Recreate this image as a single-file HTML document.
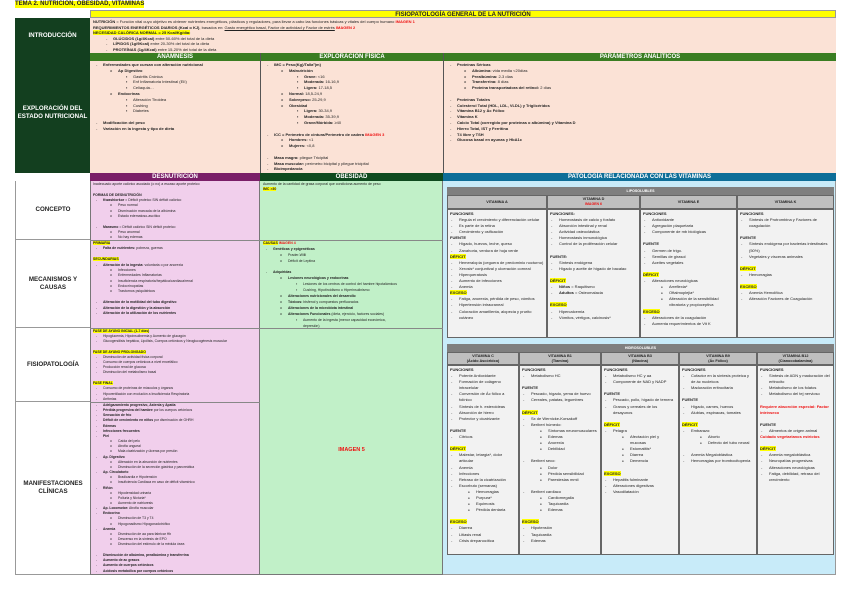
<!DOCTYPE html>
<html><head><meta charset="utf-8">
<style>
*{margin:0;padding:0;box-sizing:border-box}
body{width:848px;height:608px;background:#fff;font-family:"Liberation Sans",sans-serif;font-size:4px;line-height:5.8px;color:#222;position:relative;overflow:hidden}
.a{position:absolute}
.lab{position:absolute;display:flex;align-items:center;justify-content:center;text-align:center;font-weight:bold;font-size:6.2px;line-height:8px}
.dg{background:#133f1f;color:#fff}
.wl{background:#fff;color:#222;border-left:1px solid #999}
.hd{position:absolute;color:#fff;font-weight:bold;text-align:center;font-size:6px;line-height:8px}
.bx{position:absolute;padding:1px 3px;overflow:hidden}
.l1,.l2,.l3{position:relative}
.l1{padding-left:10px}.l1:before{content:"-";position:absolute;left:3px}
.l2{padding-left:25px}.l2:before{content:"o";position:absolute;left:17px}
.l3{padding-left:40px}.l3:before{content:"▪";position:absolute;left:33px}
.v{line-height:6.1px}
.v .l1{padding-left:9px}.v .l1:before{left:1px}
.v .l2{padding-left:26px}.v .l2:before{content:"●";left:18px;font-size:3px}
.v .sp{height:6.1px}
.y{background:#ffff00;font-weight:bold}
.r{color:#ee1111;font-weight:bold}
b{font-weight:bold}
.sp{height:5.8px}
.vh{position:absolute;background:#7f7f7f;color:#fff;font-weight:bold;text-align:center;font-size:3.6px;line-height:8px}
.vs{position:absolute;background:#bfbfbf;border:0.5px solid #666;font-weight:bold;text-align:center;font-size:3.8px;line-height:5px;display:flex;flex-direction:column;justify-content:center}
.vb{position:absolute;background:#f2f2f2;border:0.5px solid #666;padding:1px 2px;overflow:hidden}
</style></head><body>
<div class="a" style="left:15px;top:1px;font-weight:bold;font-size:6px;line-height:7px;background:#ffff00;color:#222">TEMA 2. NUTRICIÓN, OBESIDAD, VITAMINAS</div>

<!-- Row 1 -->
<div class="hd" style="left:90px;top:10px;width:746px;height:8px;background:#ffff00;color:#222;border:0.5px solid #999">FISIOPATOLOGÍA GENERAL DE LA NUTRICIÓN</div>
<div class="lab dg" style="left:15px;top:18px;width:75px;height:35px">INTRODUCCIÓN</div>
<div class="bx" style="left:90px;top:18px;width:746px;height:35px;background:#fbe2d6;line-height:5.6px">
<div><b>NUTRICIÓN</b> = Función vital cuyo objetivo es obtener nutrientes energéticos, plásticos y reguladores, para llevar a cabo las funciones básicas y vitales del cuerpo humano <span class="r">IMAGEN 1</span></div>
<div><b>REQUERIMIENTOS ENERGÉTICOS DIARIOS (Kcal o KJ)</b>, basados en: <u>Gasto energético basal, Factor de actividad y Factor de estrés</u> <span class="r">IMAGEN 2</span></div>
<div><span class="y">NECESIDAD CALÓRICA NORMAL = 25 Kcal/Kg/día:</span></div>
<div class="l1" style="margin-left:10px"><b>GLÚCIDOS (1g/4Kcal)</b> entre 50-60% del total de la dieta</div>
<div class="l1" style="margin-left:10px"><b>LÍPIDOS (1g/9Kcal)</b> entre 20-30% del total de la dieta</div>
<div class="l1" style="margin-left:10px"><b>PROTEÍNAS (1g/4Kcal)</b> entre 15-20% del total de la dieta</div>
</div>

<!-- Row 2 -->
<div class="hd" style="left:90px;top:53px;width:170px;height:8px;background:#3a7d22">ANAMNESIS</div>
<div class="hd" style="left:260px;top:53px;width:183px;height:8px;background:#3a7d22;border-left:0.5px solid #555">EXPLORACIÓN FÍSICA</div>
<div class="hd" style="left:443px;top:53px;width:393px;height:8px;background:#3a7d22;border-left:0.5px solid #555">PARÁMETROS ANALÍTICOS</div>
<div class="lab dg" style="left:15px;top:53px;width:75px;height:120px">EXPLORACIÓN DEL<br>ESTADO NUTRICIONAL</div>
<div class="bx" style="left:90px;top:61px;width:170px;height:112px;background:#fbe2d6">
<div class="l1"><b>Enfermedades que cursan con alteración nutricional</b></div>
<div class="l2"><b>Ap Digestivo</b></div>
<div class="l3">Gastritis Crónica</div><div class="l3">Enf Inflamatoria Intestinal (EII)</div><div class="l3">Celiaquía…</div>
<div class="l2"><b>Endocrinas</b></div>
<div class="l3">Alteración Tiroidea</div><div class="l3">Cushing</div><div class="l3">Diabetes</div>
<div class="sp"></div>
<div class="l1"><b>Modificación del peso</b></div>
<div class="l1"><b>Variación en la ingesta y tipo de dieta</b></div>
</div>
<div class="bx" style="left:260px;top:61px;width:183px;height:112px;background:#fbe2d6;border-left:0.5px solid #555">
<div class="l1"><b>IMC = Peso(Kg)/Talla²(m)</b></div>
<div class="l2"><b>Malnutrición</b></div>
<div class="l3"><b>Grave:</b> &lt;16</div><div class="l3"><b>Moderada:</b> 16-16,9</div><div class="l3"><b>Ligera:</b> 17-18,5</div>
<div class="l2"><b>Normal:</b> 18,5-24,9</div>
<div class="l2"><b>Sobrepeso:</b> 25-29,9</div>
<div class="l2"><b>Obesidad</b></div>
<div class="l3"><b>Ligera:</b> 30-34,9</div><div class="l3"><b>Moderada:</b> 35-39,9</div><div class="l3"><b>Grave/Mórbida:</b> ≥40</div>
<div class="sp"></div>
<div class="l1"><b>ICC = Perímetro de cintura/Perímetro de cadera</b> <span class="r">IMAGEN 3</span></div>
<div class="l2"><b>Hombres:</b> &lt;1</div><div class="l2"><b>Mujeres:</b> &lt;0,8</div>
<div class="sp"></div>
<div class="l1"><b>Masa magra:</b> pliegue Tricipital</div>
<div class="l1"><b>Masa muscular:</b> perímetro bicipital y pliegue tricipital</div>
<div class="l1"><b>Bioimpedancia</b></div>
</div>
<div class="bx" style="left:443px;top:61px;width:393px;height:112px;background:#fbe2d6;border-left:0.5px solid #555">
<div class="l1"><b>Proteínas Séricas</b></div>
<div class="l2"><b>Albúmina:</b> vida media &lt;20días</div>
<div class="l2"><b>Prealbúmina:</b> 2-3 días</div>
<div class="l2"><b>Transferrina:</b> 8 días</div>
<div class="l2"><b>Proteína transportadora del retinol:</b> 2 días</div>
<div class="sp"></div>
<div class="l1"><b>Proteínas Totales</b></div>
<div class="l1"><b>Colesterol Total (HDL, LDL, VLDL) y Triglicéridos</b></div>
<div class="l1"><b>Vitamina B12 y Ác Fólico</b></div>
<div class="l1"><b>Vitamina K</b></div>
<div class="l1"><b>Calcio Total (corregido por proteínas o albúmina) y Vitamina D</b></div>
<div class="l1"><b>Hierro Total, IST y Ferritina</b></div>
<div class="l1"><b>T4 libre y TSH</b></div>
<div class="l1"><b>Glucosa basal en ayunas y HbA1c</b></div>
</div>

<!-- Row 3 headers -->
<div class="hd" style="left:90px;top:173px;width:170px;height:8px;background:#7a1e68">DESNUTRICIÓN</div>
<div class="hd" style="left:260px;top:173px;width:183px;height:8px;background:#0f4a1f">OBESIDAD</div>
<div class="hd" style="left:443px;top:173px;width:393px;height:8px;background:#0e6e98">PATOLOGÍA RELACIONADA CON LAS VITAMINAS</div>

<div class="lab wl" style="left:15px;top:181px;width:75px;height:59px;border-bottom:1px solid #999">CONCEPTO</div>
<div class="lab wl" style="left:15px;top:240px;width:75px;height:88px;border-bottom:1px solid #999">MECANISMOS Y<br>CAUSAS</div>
<div class="lab wl" style="left:15px;top:328px;width:75px;height:74px;border-bottom:1px solid #999">FISIOPATOLOGÍA</div>
<div class="lab wl" style="left:15px;top:402px;width:75px;height:173px;border-bottom:1px solid #999">MANIFESTACIONES<br>CLÍNICAS</div>

<!-- Desnutrición column -->
<div class="a" style="left:90px;top:181px;width:170px;height:394px;background:#f1cfec;border-left:1px solid #777;border-right:1px solid #777;border-bottom:1px solid #777"></div>
<div class="a" style="left:90px;top:240px;width:170px;height:1px;background:#888"></div>
<div class="a" style="left:90px;top:328px;width:170px;height:1px;background:#888"></div>
<div class="a" style="left:90px;top:402px;width:170px;height:1px;background:#888"></div>
<div class="bx" style="left:90px;top:181px;width:170px;height:59px;font-size:3.5px;line-height:5.2px">
<div>Inadecuado aporte calórico asociado (o no) a escaso aporte proteico</div><div class="sp"></div>
<div><b>FORMAS DE DESNUTRICIÓN</b></div>
<div class="l1"><b>Kwashiorkor</b> = Déficit proteico SIN déficit calórico</div>
<div class="l2">Peso normal</div><div class="l2">Disminución marcada de la albúmina</div><div class="l2">Estado edematoso-ascítico</div>
<div class="sp"></div>
<div class="l1"><b>Marasmo</b> = Déficit calórico SIN déficit proteico</div>
<div class="l2">Peso anormal</div><div class="l2">No hay edemas</div>
</div>
<div class="bx" style="left:90px;top:240px;width:170px;height:88px;font-size:3.5px;line-height:5.3px">
<div><span class="y">PRIMARIA</span></div>
<div class="l1"><b>Falta de nutrientes:</b> pobreza, guerras</div><div class="sp"></div>
<div><span class="y">SECUNDARIAS</span></div>
<div class="l1"><b>Alteración de la ingesta:</b> voluntaria o por anorexia</div>
<div class="l2">Infecciones</div><div class="l2">Enfermedades Inflamatorias</div><div class="l2">Insuficiencia respiratoria/hepática/cardiaca/renal</div><div class="l2">Endocrinopatías</div><div class="l2">Trastornos psiquiátricos</div>
<div class="sp"></div>
<div class="l1"><b>Alteración de la motilidad del tubo digestivo</b></div>
<div class="l1"><b>Alteración de la digestión y la absorción</b></div>
<div class="l1"><b>Alteración de la utilización de los nutrientes</b></div>
</div>
<div class="bx" style="left:90px;top:328px;width:170px;height:74px;font-size:3.4px;line-height:5.1px">
<div><span class="y">FASE DE AYUNO INICIAL (1-7 días)</span></div>
<div class="l1">Hipoglucemia, Hipoinsulinemia y Aumento de glucagón</div>
<div class="l1">Glucogenólisis hepática, Lipólisis, Cuerpos cetónicos y Neoglucogénesis muscular</div><div class="sp"></div>
<div><span class="y">FASE DE AYUNO PROLONGADO</span></div>
<div class="l1">Disminución de actividad física corporal</div><div class="l1">Consumo de cuerpos cetónicos a nivel encefálico</div><div class="l1">Producción renal de glucosa</div><div class="l1">Disminución del metabolismo basal</div><div class="sp"></div>
<div><span class="y">FASE FINAL</span></div>
<div class="l1">Consumo de proteínas de músculos y órganos</div><div class="l1">Hipoventilación con evolución a Insuficiencia Respiratoria</div><div class="l1">Arritmias</div>
</div>
<div class="bx" style="left:90px;top:402px;width:170px;height:173px;font-size:3.4px;line-height:5.15px">
<div class="l1"><b>Adelgazamiento progresivo, Astenia y Apatía</b></div>
<div class="l1"><b>Pérdida progresiva del hambre</b> por los cuerpos cetónicos</div>
<div class="l1"><b>Sensación de frío</b></div>
<div class="l1"><b>Déficit de crecimiento en niños</b> por disminución de GHRH</div>
<div class="l1"><b>Edemas</b></div><div class="l1"><b>Infecciones frecuentes</b></div><div class="l1"><b>Piel</b></div>
<div class="l2">Caída del pelo</div><div class="l2">Atrofia ungueal</div><div class="l2">Mala cicatrización y úlceras por presión</div>
<div class="l1"><b>Ap. Digestivo</b></div>
<div class="l2">Alteración en la absorción de nutrientes</div><div class="l2">Disminución de la secreción gástrica y pancreática</div>
<div class="l1"><b>Ap. Circulatorio</b></div>
<div class="l2">Bradicardia e Hipotensión</div><div class="l2">Insuficiencia Cardiaca en caso de déficit vitamínico</div>
<div class="l1"><b>Riñón</b></div>
<div class="l2">Hipodensidad urinaria</div><div class="l2">Poliuria y Nicturia*</div><div class="l2">Aumento de natriuresis</div>
<div class="l1"><b>Ap. Locomotor:</b> Atrofia muscular</div>
<div class="l1"><b>Endocrino</b></div>
<div class="l2">Disminución de T3 y T4</div><div class="l2">Hipogonadismo Hipogonadotrófico</div>
<div class="l1"><b>Anemia</b></div>
<div class="l2">Disminución de aa para fabricar Hb</div><div class="l2">Descenso en la síntesis de EPO</div><div class="l2">Disminución del estímulo de la médula ósea</div>
<div class="sp"></div>
<div class="l1"><b>Disminución de albúmina, prealbúmina y transferrina</b></div>
<div class="l1"><b>Aumento de ac grasos</b></div><div class="l1"><b>Aumento de cuerpos cetónicos</b></div><div class="l1"><b>Acidosis metabólica por cuerpos cetónicos</b></div>
</div>

<!-- Obesidad column -->
<div class="a" style="left:260px;top:181px;width:183px;height:394px;background:#c1f0c8;border-right:1px solid #777;border-bottom:1px solid #777"></div>
<div class="a" style="left:260px;top:240px;width:183px;height:1px;background:#888"></div>
<div class="a" style="left:260px;top:328px;width:183px;height:1px;background:#888"></div>
<div class="bx" style="left:260px;top:181px;width:183px;height:59px;font-size:3.5px;line-height:5.2px">
<div>Aumento de la cantidad de grasa corporal que condiciona aumento de peso</div>
<div><span class="y">IMC &gt;30</span></div>
</div>
<div class="bx" style="left:260px;top:240px;width:183px;height:88px;font-size:3.5px;line-height:5.9px">
<div><span class="y">CAUSAS</span> <span class="r">IMAGEN 4</span></div>
<div class="l1"><b>Genéticas y epigenéticas</b></div>
<div class="l2">Prader-Willi</div><div class="l2">Déficit de Leptina</div><div class="sp"></div>
<div class="l1"><b>Adquiridas</b></div>
<div class="l2"><b>Lesiones neurológicas y endocrinas</b></div>
<div class="l3">Lesiones de los centros de control del hambre hipotalámicos</div>
<div class="l3">Cushing, Hipotiroidismo o Hiperinsulinismo</div>
<div class="l2"><b>Alteraciones nutricionales del desarrollo</b></div>
<div class="l2"><b>Tóxicos:</b> bisfenol y compuestos perfluorados</div>
<div class="l2"><b>Alteraciones de la microbiota intestinal</b></div>
<div class="l2"><b>Alteraciones Funcionales</b> (dieta, ejercicio, factores sociales)</div>
<div class="l3">Aumento de la ingesta (menor capacidad económica,<br>depresión)</div>
</div>
<div class="a r" style="left:260px;top:448px;width:183px;text-align:center;font-size:5.5px">IMAGEN 5</div>

<!-- Vitamins -->
<div class="a" style="left:443px;top:181px;width:393px;height:394px;background:#c8ebf9;border-right:1px solid #999;border-bottom:1px solid #999"></div>
<div class="vh" style="left:447px;top:187px;width:387px;height:8px">LIPOSOLUBLES</div>
<div class="vs" style="left:447px;top:195px;width:100px;height:14px">VITAMINA A</div>
<div class="vs" style="left:547px;top:195px;width:93px;height:14px">VITAMINA D<span class="r" style="font-size:3.5px">IMAGEN 6</span></div>
<div class="vs" style="left:640px;top:195px;width:97px;height:14px">VITAMINA E</div>
<div class="vs" style="left:737px;top:195px;width:97px;height:14px">VITAMINA K</div>
<div class="vb v" style="left:447px;top:209px;width:100px;height:129px">
<div><b>FUNCIONES</b></div>
<div class="l1">Regula el crecimiento y diferenciación celular</div><div class="l1">Es parte de la retina</div><div class="l1">Crecimiento y osificación</div>
<div><b>FUENTE</b></div>
<div class="l1">Hígado, huevos, leche, queso</div><div class="l1">Zanahoria, verdura de hoja verde</div>
<div><span class="y">DÉFICIT</span></div>
<div class="l1">Hemeralopía (ceguera de predominio nocturno)</div><div class="l1">Xerosis* conjuntival y ulceración corneal</div><div class="l1">Hiperqueratosis</div><div class="l1">Aumento de infecciones</div><div class="l1">Anemia</div>
<div><span class="y">EXCESO</span></div>
<div class="l1">Fatiga, anorexia, pérdida de peso, vómitos</div><div class="l1">Hipertensión intracraneal</div><div class="l1">Coloración amarillenta, alopecia y prurito cutáneo</div>
</div>
<div class="vb v" style="left:547px;top:209px;width:93px;height:129px">
<div><b>FUNCIONES:</b></div>
<div class="l1">Homeostasis de calcio y fosfato</div><div class="l1">Absorción intestinal y renal</div><div class="l1">Actividad osteoclástica</div><div class="l1">Homeostasis inmunológica</div><div class="l1">Control de la proliferación celular</div><div class="sp"></div>
<div><b>FUENTE:</b></div>
<div class="l1">Síntesis endógena</div><div class="l1">Hígado y aceite de hígado de bacalao</div><div class="sp"></div>
<div><span class="y">DÉFICIT</span></div>
<div class="l1"><b>Niños</b> = Raquitismo</div><div class="l1"><b>Adultos</b> = Osteomalacia</div><div class="sp"></div>
<div><span class="y">EXCESO</span></div>
<div class="l1">Hipercalcemia</div><div class="l1">Vómitos, vértigos, calcinosis*</div>
</div>
<div class="vb v" style="left:640px;top:209px;width:97px;height:129px">
<div><b>FUNCIONES</b></div>
<div class="l1">Antioxidante</div><div class="l1">Agregación plaquetaria</div><div class="l1">Componente de mb biológicas</div><div class="sp"></div>
<div><b>FUENTE</b></div>
<div class="l1">Germen de trigo.</div><div class="l1">Semillas de girasol</div><div class="l1">Aceites vegetales</div><div class="sp"></div>
<div><span class="y">DÉFICIT</span></div>
<div class="l1">Alteraciones neurológicas</div>
<div class="l2">Arreflexia*</div><div class="l2">Oftalmoplejia*</div><div class="l2">Alteración de la sensibilidad vibratoria y propioceptiva</div>
<div><span class="y">EXCESO</span></div>
<div class="l1">Alteraciones de la coagulación</div><div class="l1">Aumenta requerimientos de Vit K</div>
</div>
<div class="vb v" style="left:737px;top:209px;width:97px;height:129px">
<div><b>FUNCIONES</b></div>
<div class="l1">Síntesis de Protrombina y Factores de coagulación</div><div class="sp"></div>
<div><b>FUENTE</b></div>
<div class="l1">Síntesis endógena por bacterias intestinales (50%)</div><div class="l1">Vegetales y vísceras animales</div><div class="sp"></div>
<div><span class="y">DÉFICIT</span></div>
<div class="l1">Hemorragias</div><div class="sp"></div>
<div><span class="y">EXCESO</span></div>
<div class="l1">Anemia Hemolítica</div><div class="l1">Alteración Factores de Coagulación</div>
</div>

<div class="vh" style="left:447px;top:344px;width:387px;height:8px">HIDROSOLUBLES</div>
<div class="vs" style="left:447px;top:352px;width:72px;height:13px">VITAMINA C<span>(Ácido Ascórbico)</span></div>
<div class="vs" style="left:519px;top:352px;width:82px;height:13px">VITAMINA B1<span>(Tiamina)</span></div>
<div class="vs" style="left:601px;top:352px;width:78px;height:13px">VITAMINA B3<span>(Niacina)</span></div>
<div class="vs" style="left:679px;top:352px;width:78px;height:13px">VITAMINA B9<span>(Ác Fólico)</span></div>
<div class="vs" style="left:757px;top:352px;width:77px;height:13px">VITAMINA B12<span>(Cianocobalamina)</span></div>
<div class="vb v" style="left:447px;top:365px;width:72px;height:190px">
<div><b>FUNCIONES</b></div>
<div class="l1">Potente Antioxidante</div><div class="l1">Formación de colágeno intracelular</div><div class="l1">Conversión de Ác fólico a folínico</div><div class="l1">Síntesis de h. esteroideas</div><div class="l1">Absorción de hierro</div><div class="l1">Protector y cicatrizante</div><div class="sp"></div>
<div><b>FUENTE</b></div><div class="l1">Cítricos</div><div class="sp"></div>
<div><span class="y">DÉFICIT</span></div>
<div class="l1">Malestar, letargia*, dolor articular</div><div class="l1">Anemia</div><div class="l1">Infecciones</div><div class="l1">Retraso de la cicatrización</div><div class="l1">Escorbuto (semanas)</div>
<div class="l2">Hemorragias</div><div class="l2">Purpura*</div><div class="l2">Equimosis</div><div class="l2">Pérdida dentaria</div><div class="sp"></div>
<div><span class="y">EXCESO</span></div>
<div class="l1">Diarrea</div><div class="l1">Litiasis renal</div><div class="l1">Crisis drepanocítica</div>
</div>
<div class="vb v" style="left:519px;top:365px;width:82px;height:190px">
<div><b>FUNCIONES</b></div><div class="l1">Metabolismo HC</div><div class="sp"></div>
<div><b>FUENTE</b></div><div class="l1">Pescado, hígado, yema de huevo</div><div class="l1">Cereales, patatas, legumbres</div><div class="sp"></div>
<div><span class="y">DÉFICIT</span></div>
<div class="l1">Sx de Wernicke-Korsakoff</div><div class="l1">Beriberi húmedo:</div>
<div class="l2">Síntomas neuromusculares</div><div class="l2">Edemas</div><div class="l2">Anorexia</div><div class="l2">Debilidad</div><div class="sp"></div>
<div class="l1">Beriberi seco:</div>
<div class="l2">Dolor</div><div class="l2">Pérdida sensibilidad</div><div class="l2">Parestesias mmii</div><div class="sp"></div>
<div class="l1">Beriberi cardiaco</div>
<div class="l2">Cardiomegalia</div><div class="l2">Taquicardia</div><div class="l2">Edemas</div><div class="sp"></div>
<div><span class="y">EXCESO</span></div>
<div class="l1">Hipotensión</div><div class="l1">Taquicardia</div><div class="l1">Edemas</div>
</div>
<div class="vb v" style="left:601px;top:365px;width:78px;height:190px">
<div><b>FUNCIONES</b></div><div class="l1">Metabolismo HC y aa</div><div class="l1">Componente de NAD y NADP</div><div class="sp"></div>
<div><b>FUENTE</b></div><div class="l1">Pescado, pollo, hígado de ternera</div><div class="l1">Granos y cereales de los desayunos</div><div class="sp"></div>
<div><span class="y">DÉFICIT</span></div>
<div class="l1">Pelagra</div>
<div class="l2">Afectación piel y mucosas</div><div class="l2">Estomatitis*</div><div class="l2">Diarrea</div><div class="l2">Demencia</div><div class="sp"></div>
<div><span class="y">EXCESO</span></div>
<div class="l1">Hepatitis fulminante</div><div class="l1">Alteraciones digestivas</div><div class="l1">Vasodilatación</div>
</div>
<div class="vb v" style="left:679px;top:365px;width:78px;height:190px">
<div><b>FUNCIONES</b></div><div class="l1">Cofactor en la síntesis proteica y de ác nucleicos</div><div class="l1">Maduración eritrocitaria</div><div class="sp"></div>
<div><b>FUENTE</b></div><div class="l1">Hígado, carnes, huevos</div><div class="l1">Alubias, espinacas, tomates</div><div class="sp"></div>
<div><span class="y">DÉFICIT</span></div>
<div class="l1">Embarazo:</div><div class="l2">Aborto</div><div class="l2">Defecto del tubo neural</div><div class="sp"></div>
<div class="l1">Anemia Megaloblástica</div><div class="l1">Hemorragias por trombocitopenia</div>
</div>
<div class="vb v" style="left:757px;top:365px;width:77px;height:190px">
<div><b>FUNCIONES</b></div><div class="l1">Síntesis de ADN y maduración del eritrocito</div><div class="l1">Metabolismo de los folatos</div><div class="l1">Metabolismo del tej nervioso</div><div class="sp"></div>
<div class="r">Requiere absorción especial: Factor intrínseco</div><div class="sp"></div>
<div><b>FUENTE</b></div><div class="l1">Alimentos de origen animal</div><div class="r">Cuidado vegetarianos estrictos</div><div class="sp"></div>
<div><span class="y">DÉFICIT</span></div>
<div class="l1">Anemia megaloblástica</div><div class="l1">Neuropatías progresivas</div><div class="l1">Alteraciones neurológicas</div><div class="l1">Fatiga, debilidad, retraso del crecimiento</div>
</div>
</body></html>
